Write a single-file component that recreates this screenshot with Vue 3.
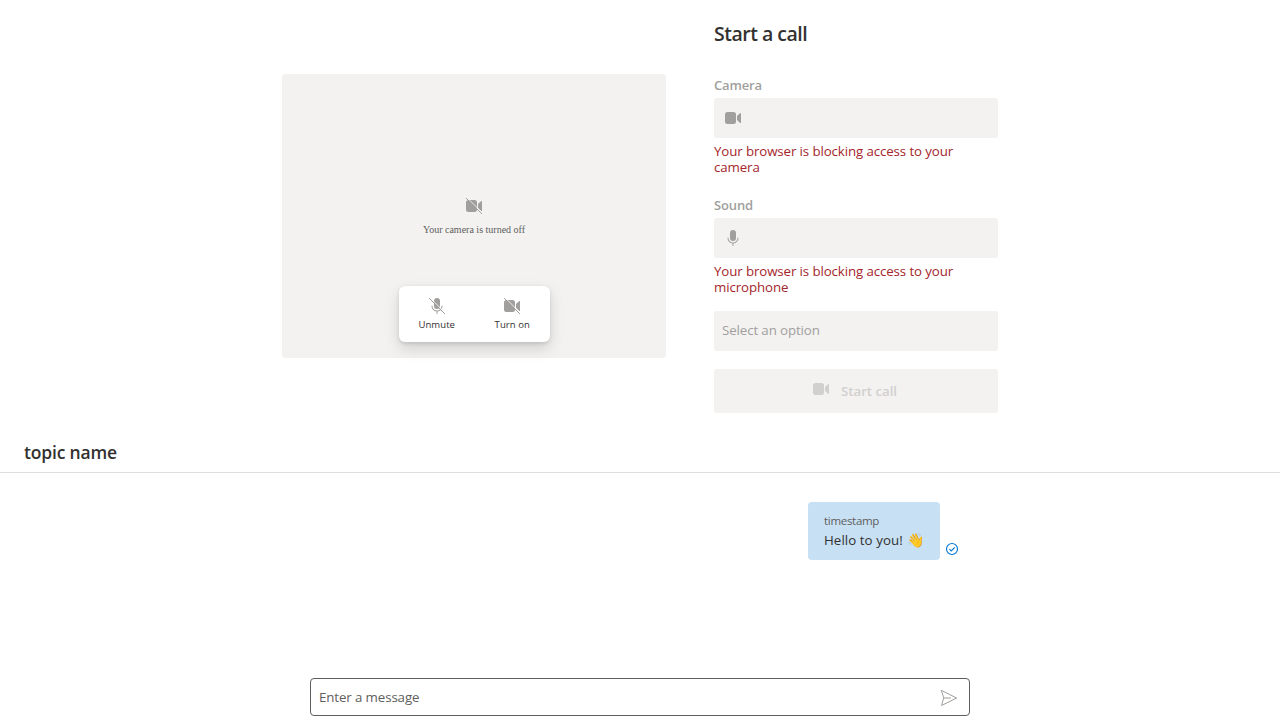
<script setup>
const devices = [
  { label: 'Camera', icon: 'video', error: 'Your browser is blocking access to your camera' },
  { label: 'Sound', icon: 'mic', error: 'Your browser is blocking access to your microphone' },
]
const videoPath =
  'M13 6.5A2.5 2.5 0 0 0 10.5 4h-6A2.5 2.5 0 0 0 2 6.5v7A2.5 2.5 0 0 0 4.5 16h6a2.5 2.5 0 0 0 2.5-2.5zM18 5v10c-.6 0-1-.2-1.4-.6L14 12V8l2.6-2.4C17 5.2 17.4 5 18 5z'
const micPath =
  'M10 13a3 3 0 0 0 3-3V5a3 3 0 0 0-6 0v5a3 3 0 0 0 3 3zM5 9.5c.28 0 .5.22.5.5a4.5 4.5 0 1 0 9 0 .5.5 0 0 1 1 0 5.5 5.5 0 0 1-5 5.48v2.02a.5.5 0 0 1-1 0v-2.02A5.5 5.5 0 0 1 4.5 10c0-.28.22-.5.5-.5z'
</script>

<template>
  <div class="page">
    <section class="call">
      <div class="preview">
        <div class="off">
          <svg class="icon" viewBox="0 0 20 20">
            <path :d="videoPath" />
            <path class="gap preview-gap" d="M3 1.6 18.4 17" />
            <path class="slash" d="M2.4 2.4 17.6 17.6" />
          </svg>
          <span>Your camera is turned off</span>
        </div>
        <div class="controls">
          <button class="control">
            <svg class="icon" viewBox="0 0 20 20">
              <path :d="micPath" />
              <path class="gap" d="M3 1.6 18.4 17" />
              <path class="slash" d="M2.4 2.4 17.6 17.6" />
            </svg>
            <span>Unmute</span>
          </button>
          <button class="control">
            <svg class="icon" viewBox="0 0 20 20">
              <path :d="videoPath" />
              <path class="gap" d="M3 1.6 18.4 17" />
              <path class="slash" d="M2.4 2.4 17.6 17.6" />
            </svg>
            <span>Turn on</span>
          </button>
        </div>
      </div>
      <div class="setup">
        <h1>Start a call</h1>
        <div v-for="d in devices" :key="d.label" class="device">
          <label>{{ d.label }}</label>
          <div class="field">
            <svg class="icon" viewBox="0 0 20 20"><path :d="d.icon === 'video' ? videoPath : micPath" /></svg>
          </div>
          <p class="error">{{ d.error }}</p>
        </div>
        <div class="field select">Select an option</div>
        <button class="start" disabled>
          <svg class="icon" viewBox="0 0 20 20"><path :d="videoPath" /></svg>
          <span>Start call</span>
        </button>
      </div>
    </section>
    <header class="topic">topic name</header>
    <section class="thread">
      <div class="message">
        <div class="bubble">
          <div class="time">timestamp</div>
          <div class="body">Hello to you! <span class="wave">👋</span></div>
        </div>
        <svg class="sent" viewBox="0 0 14 14">
          <circle cx="7" cy="7" r="5.5" />
          <path d="m4.5 7.2 1.7 1.7L9.8 5.3" />
        </svg>
      </div>
    </section>
    <div class="composer">
      <span>Enter a message</span>
      <svg class="send" viewBox="0 0 20 20">
        <path d="M2.6 2.5 17.6 10 2.6 17.5 4.6 10zM4.6 10H11.5" />
      </svg>
    </div>
  </div>
</template>

<style>
body {
  background: #fff;
  overflow: hidden;
}
</style>

<style scoped>
* {
  box-sizing: border-box;
}
.page {
  width: 1280px;
  height: 720px;
  display: flex;
  flex-direction: column;
  font-family: 'Open Sans', 'Noto Sans', sans-serif;
  font-size: 13.3px;
  letter-spacing: -0.11px;
  color: #323130;
}
.call {
  display: flex;
  justify-content: center;
  gap: 48px;
  height: 430px;
}
.icon {
  display: block;
  width: 20px;
  height: 20px;
  fill: #a19f9d;
}
.gap {
  stroke: #fff;
  stroke-width: 0.8;
}
.preview-gap {
  stroke: #f3f2f1;
}
.slash {
  stroke: #a19f9d;
  stroke-width: 1;
  stroke-linecap: round;
}
.preview {
  position: relative;
  width: 384px;
  height: 284px;
  margin-top: 74px;
  border-radius: 4px;
  background: #f3f2f1;
}
.off {
  display: flex;
  flex-direction: column;
  align-items: center;
  gap: 8px;
  padding-top: 122px;
  font: 10px/12px 'Liberation Serif', serif;
  letter-spacing: 0;
  color: #605e5c;
}
.controls {
  position: absolute;
  left: 116.5px;
  bottom: 16px;
  display: flex;
  width: 151px;
  height: 56px;
  border-radius: 6px;
  background: #fff;
  box-shadow: 0 6.4px 14.4px rgba(0, 0, 0, 0.132), 0 1.2px 3.6px rgba(0, 0, 0, 0.108);
}
.control {
  flex: 1;
  display: flex;
  flex-direction: column;
  align-items: center;
  gap: 2px;
  padding: 10px 0 0 1px;
  border: 0;
  background: none;
  font: 9.5px/14px 'Open Sans', sans-serif;
  letter-spacing: 0.08px;
  color: #323130;
}
.setup {
  width: 284px;
}
h1 {
  margin: 20px 0 0;
  height: 56px;
  font-size: 19.5px;
  line-height: 28px;
  font-weight: 600;
  letter-spacing: -0.5px;
}
.device {
  height: 120px;
}
label {
  display: block;
  height: 22px;
  font-size: 13px;
  line-height: 19px;
  font-weight: 600;
  letter-spacing: -0.15px;
  color: #a19f9d;
}
.field {
  display: flex;
  align-items: center;
  height: 40px;
  padding-left: 9px;
  border-radius: 2px;
  background: #f3f2f1;
}
.error {
  margin: 5px 0 0;
  line-height: 16px;
  color: #a4262c;
}
.select {
  margin-top: -5px;
  padding: 0 0 2px 8px;
  color: #a19f9d;
}
.start {
  display: flex;
  align-items: center;
  justify-content: center;
  gap: 10px;
  width: 100%;
  height: 44px;
  margin-top: 18px;
  padding: 0 4px 0 0;
  border: 0;
  border-radius: 2px;
  background: #f3f2f1;
  font: 600 13.3px/20px 'Open Sans', sans-serif;
  letter-spacing: -0.06px;
  color: #d2d0ce;
}
.start .icon {
  margin-bottom: 4px;
  fill: #d2d0ce;
}
.topic {
  height: 43px;
  padding: 9px 24px 0;
  border-bottom: 1px solid #e1dfdd;
  font-size: 17.5px;
  line-height: 26px;
  font-weight: 600;
  letter-spacing: -0.18px;
}
.thread {
  flex: 1;
  padding: 29px 321px 0 0;
}
.message {
  display: flex;
  justify-content: flex-end;
  align-items: flex-end;
  gap: 5px;
}
.bubble {
  width: 132px;
  height: 58px;
  padding: 10px 16px 0;
  border-radius: 4px;
  background: #c7e0f4;
  white-space: nowrap;
}
.time {
  font-size: 11.5px;
  line-height: 18px;
  letter-spacing: -0.3px;
  color: #605e5c;
}
.body {
  line-height: 20px;
  letter-spacing: 0.06px;
}
.wave {
  margin-left: 1px;
  font-family: 'Noto Color Emoji', sans-serif;
  font-size: 14px;
  line-height: 1;
}
.sent {
  width: 14px;
  height: 14px;
  margin-bottom: 4px;
  fill: none;
  stroke: #0078d4;
  stroke-width: 1.15;
}
.composer {
  display: flex;
  align-items: center;
  justify-content: space-between;
  width: 660px;
  height: 38px;
  margin: 0 auto 4px;
  padding: 0 10px 0 8px;
  border: 1px solid #605e5c;
  border-radius: 4px;
  color: #605e5c;
}
.send {
  width: 20px;
  height: 20px;
  margin-top: 2px;
  fill: none;
  stroke: #a19f9d;
  stroke-linejoin: round;
  stroke-linecap: round;
}
</style>
